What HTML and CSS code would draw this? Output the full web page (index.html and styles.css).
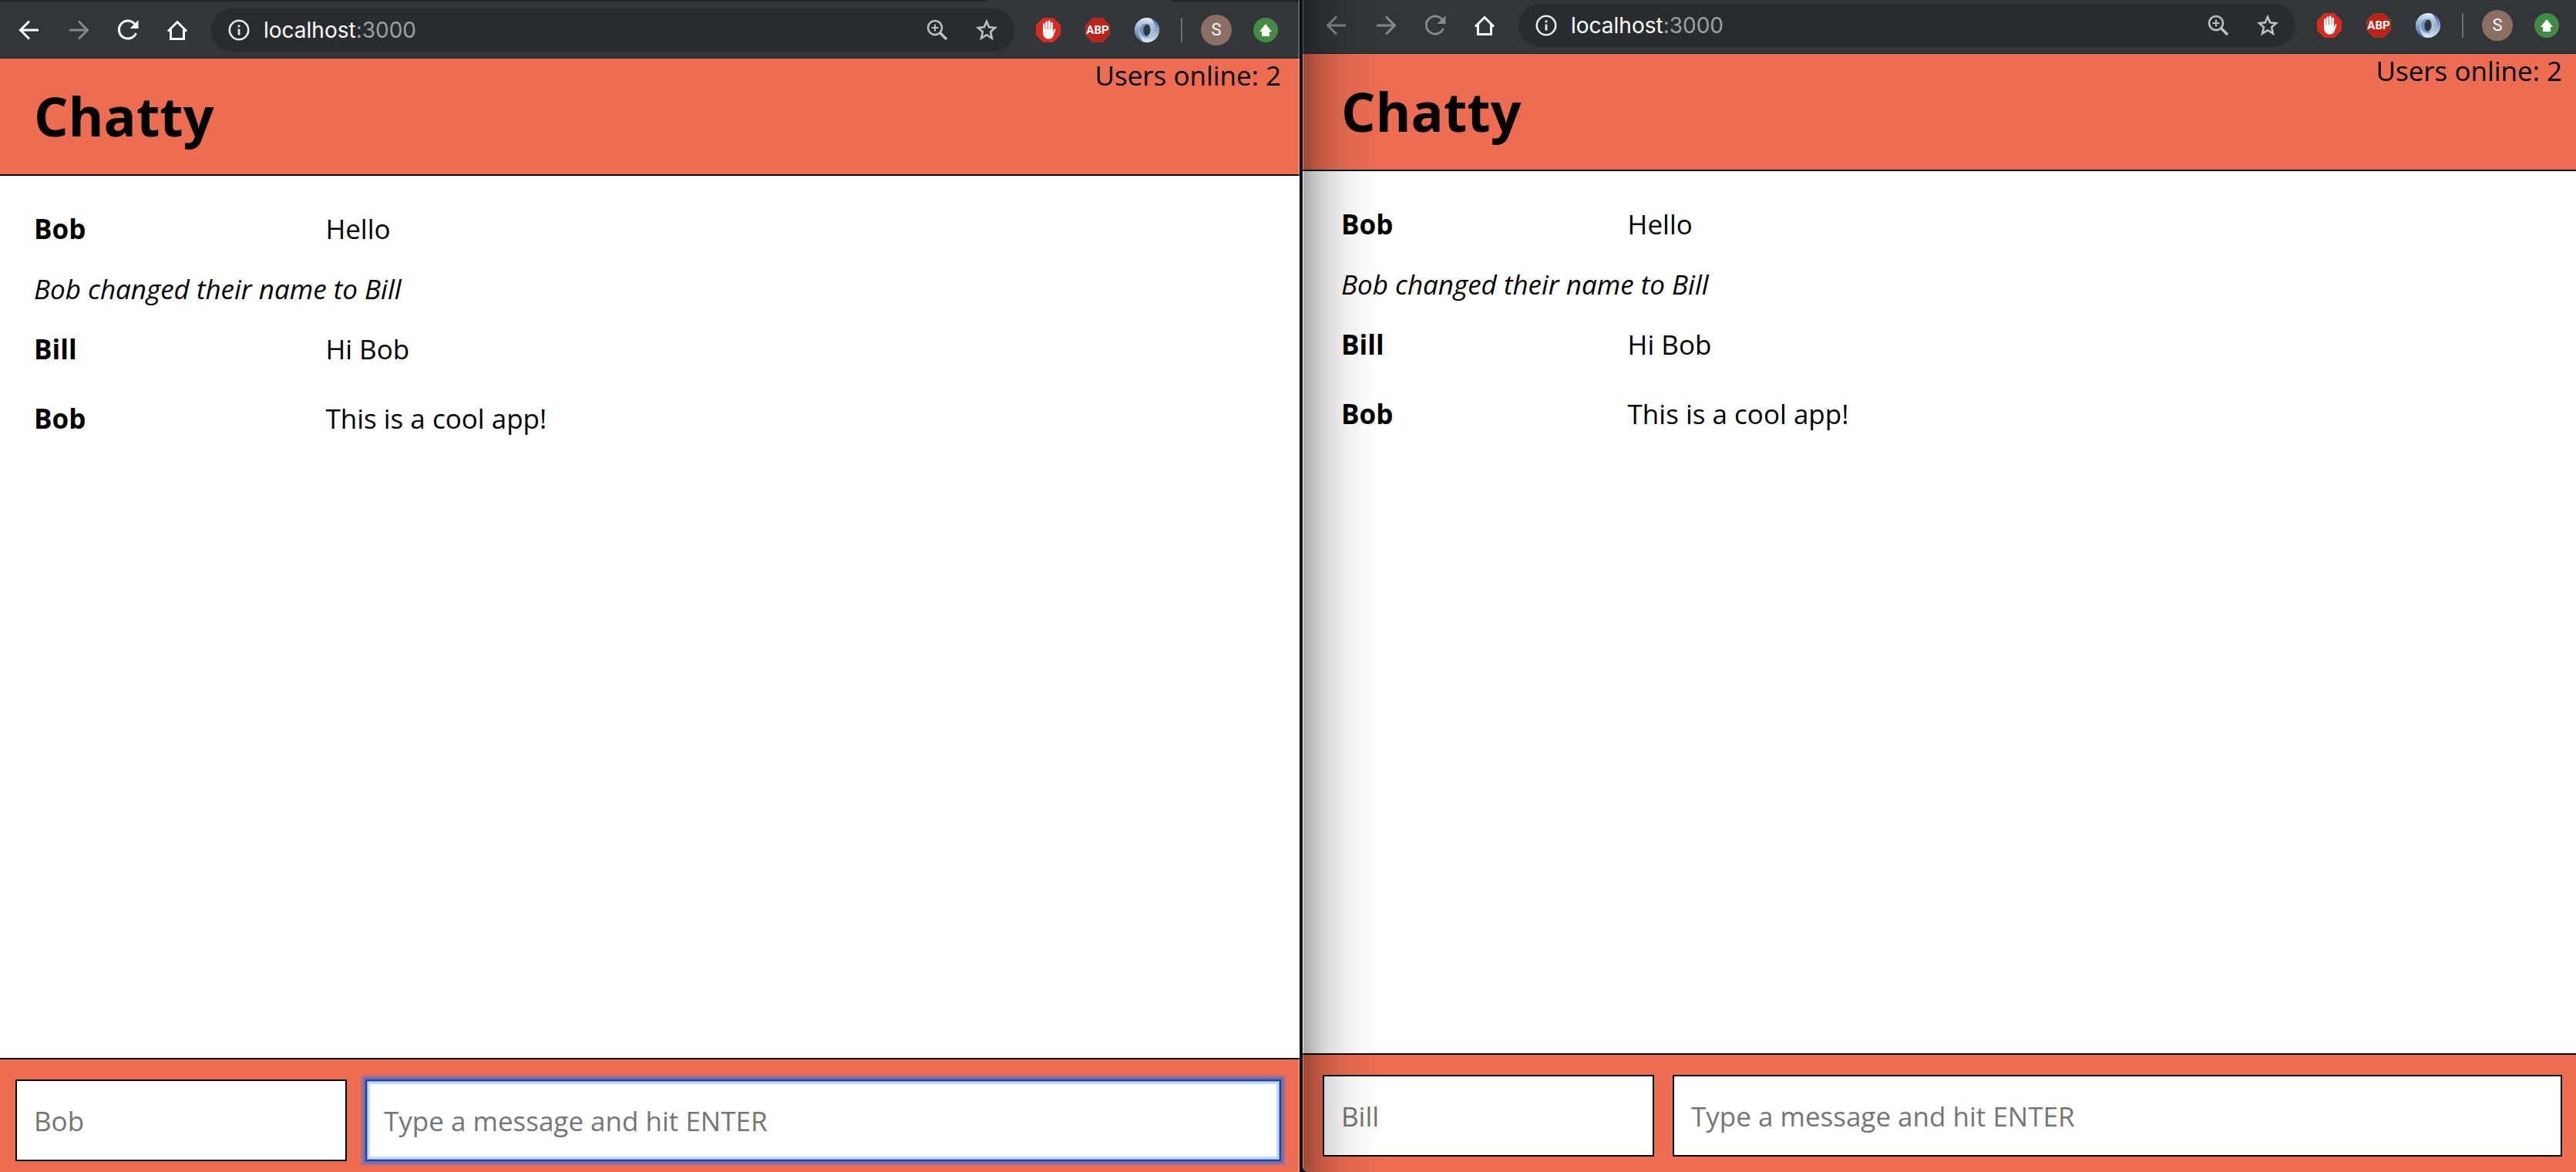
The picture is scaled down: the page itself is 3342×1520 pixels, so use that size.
FILE: index.html
```
<!DOCTYPE html>
<html lang="en">
<head>
<meta charset="utf-8">
<title>Chatty</title>
<link rel="stylesheet" href="styles.css">
</head>
<body>
<svg class="sprite" aria-hidden="true">
  <defs>
    <linearGradient id="ringBase" x1="0" y1="0" x2="0" y2="1"><stop offset="0" stop-color="#dfeaf4"/><stop offset=".5" stop-color="#8fadcd"/><stop offset="1" stop-color="#dce8f2"/></linearGradient>
    <linearGradient id="ringLeft" x1="0" y1="0" x2="0" y2="1"><stop offset="0" stop-color="#c3d5e6"/><stop offset=".6" stop-color="#7597bf"/><stop offset="1" stop-color="#3f689e"/></linearGradient>
    <linearGradient id="ringRight" x1="0" y1="0" x2="0" y2="1"><stop offset="0" stop-color="#3f689e"/><stop offset=".4" stop-color="#7597bf"/><stop offset="1" stop-color="#c9d9e8"/></linearGradient>
  </defs>
  <symbol id="back" viewBox="0 0 32 32"><path d="M28 16H5M16 4.500L4.500 16L16 27.500" fill="none" stroke="currentColor" stroke-width="3"/></symbol>
  <symbol id="forward" viewBox="0 0 32 32"><path d="M4 16H27M16 4.500L27.500 16L16 27.500" fill="none" stroke="currentColor" stroke-width="3"/></symbol>
  <symbol id="reload" viewBox="0 0 32 32"><path d="M25 8.500A11.500 11.500 0 1 0 26.500 20" fill="none" stroke="currentColor" stroke-width="3"/><path d="M29.500 3V14H18.500Z" fill="currentColor"/></symbol>
  <symbol id="home" viewBox="0 0 32 32"><path d="M4 17.500L16 5.500L28 17.500M7.500 15V27.500H24.500V15" fill="none" stroke="currentColor" stroke-width="3"/></symbol>
  <symbol id="info" viewBox="0 0 32 32"><circle cx="16" cy="16" r="12.200" fill="none" stroke="currentColor" stroke-width="2.600"/><path d="M14.600 9.500h2.800v2.800h-2.800zM14.600 14.500h2.800v8h-2.800z" fill="currentColor"/></symbol>
  <symbol id="magnify" viewBox="0 0 32 32"><circle cx="13" cy="13" r="9" fill="none" stroke="currentColor" stroke-width="2.600"/><path d="M13 8.500v9M8.500 13h9" stroke="currentColor" stroke-width="2"/><path d="M19.500 19.500L28 28" stroke="currentColor" stroke-width="3.600"/></symbol>
  <symbol id="star" viewBox="0 0 32 32"><path d="M16 5L19.200 12.300L27 13L21.100 18.300L22.900 26.500L16 22.200L9.100 26.500L10.900 18.300L5 13L12.800 12.300Z" fill="none" stroke="currentColor" stroke-width="2.600"/></symbol>
  <symbol id="hand" viewBox="0 0 32 32"><path d="M9.500 0h13L32 9.500v13L22.500 32h-13L0 22.500v-13z" fill="#d52d20"/><path d="M9 19V8.500a1.300 1.300 0 0 1 2.600 0V15h.7V6a1.400 1.400 0 0 1 2.800 0v9h.7V5a1.400 1.400 0 0 1 2.800 0v10h.7V7a1.300 1.300 0 0 1 2.600 0v12l1.200-3.500c.8-1.900 2.600-1.300 2.200.3L23 22.500C21.900 26 20 27.500 16.500 27.500S9 25 9 19z" fill="#fff"/></symbol>
  <symbol id="octagon" viewBox="0 0 32 32"><path d="M9.500 .5h13L31.500 9.500v13L22.500 31.500h-13L.5 22.500v-13z" fill="#bd2319" stroke="#8c3a34" stroke-width="1"/></symbol>
  <symbol id="ring" viewBox="0 0 32 32">
    <circle cx="16" cy="16" r="16" fill="url(#ringBase)"/>
    <path d="M20 7C10 2 2 11 5 20C6 25 8 28 11 31C4 29 0 23 0 16C0 6 10-1 20 7z" fill="url(#ringLeft)"/>
    <path d="M12 25C22 30 30 21 27 12C26 7 24 4 21 1C28 3 32 9 32 16C32 26 22 33 12 25z" fill="url(#ringRight)"/>
    <path d="M11 8C3 15 8 29 20 25C13 23 11 15 16 8z" fill="#5f86b4" opacity=".75"/>
    <path d="M21 24C28 17 25 4 14 7C19 9 21 17 17 24z" fill="#a9c0d9" opacity=".9"/>
    <ellipse cx="16" cy="16" rx="4.500" ry="7.500" fill="#2d3740" transform="rotate(4 16 16)"/>
  </symbol>
  <symbol id="up" viewBox="0 0 32 32"><circle cx="16" cy="16" r="16" fill="#448c45"/><path d="M16 8L24 18H21V24H11V18H8Z" fill="#fff"/></symbol>
</svg>

<div class="desktop">
  <section class="window" aria-label="Bob's browser">
    <div class="toolbar">
      <nav class="nav">
        <button class="tool" aria-label="Back"><svg><use href="#back"/></svg></button>
        <button class="tool dim" aria-label="Forward"><svg><use href="#forward"/></svg></button>
        <button class="tool" aria-label="Reload"><svg><use href="#reload"/></svg></button>
        <button class="tool" aria-label="Home"><svg><use href="#home"/></svg></button>
      </nav>
      <div class="omnibox">
        <button class="tool site" aria-label="Site information"><svg><use href="#info"/></svg></button>
        <span class="url">localhost<span class="port">:3000</span></span>
        <button class="tool soft" aria-label="Zoom"><svg><use href="#magnify"/></svg></button>
        <button class="tool soft" aria-label="Bookmark"><svg><use href="#star"/></svg></button>
      </div>
      <div class="extensions">
        <button class="tool" aria-label="Blocker"><svg><use href="#hand"/></svg></button>
        <button class="tool abp"><svg aria-hidden="true"><use href="#octagon"/></svg><span>ABP</span></button>
        <button class="tool" aria-label="JSON viewer"><svg><use href="#ring"/></svg></button>
      </div>
      <div class="account">
        <button class="avatar">S</button>
        <button class="tool" aria-label="Update"><svg><use href="#up"/></svg></button>
      </div>
    </div>
    <header class="header">
      <h1>Chatty</h1>
      <p class="online">Users online: 2</p>
    </header>
    <main class="messages">
      <div class="message"><strong>Bob</strong><span>Hello</span></div>
      <p class="notice">Bob changed their name to Bill</p>
      <div class="message"><strong>Bill</strong><span>Hi Bob</span></div>
      <div class="message"><strong>Bob</strong><span>This is a cool app!</span></div>
    </main>
    <footer class="chatbar">
      <input class="username" type="text" placeholder="Bob" aria-label="Your name">
      <input class="compose active" type="text" placeholder="Type a message and hit ENTER" aria-label="Message">
    </footer>
  </section>

  <section class="window behind" aria-label="Bill's browser">
    <div class="toolbar">
      <nav class="nav">
        <button class="tool dim" aria-label="Back"><svg><use href="#back"/></svg></button>
        <button class="tool dim" aria-label="Forward"><svg><use href="#forward"/></svg></button>
        <button class="tool dim" aria-label="Reload"><svg><use href="#reload"/></svg></button>
        <button class="tool" aria-label="Home"><svg><use href="#home"/></svg></button>
      </nav>
      <div class="omnibox">
        <button class="tool site" aria-label="Site information"><svg><use href="#info"/></svg></button>
        <span class="url">localhost<span class="port">:3000</span></span>
        <button class="tool soft" aria-label="Zoom"><svg><use href="#magnify"/></svg></button>
        <button class="tool soft" aria-label="Bookmark"><svg><use href="#star"/></svg></button>
      </div>
      <div class="extensions">
        <button class="tool" aria-label="Blocker"><svg><use href="#hand"/></svg></button>
        <button class="tool abp"><svg aria-hidden="true"><use href="#octagon"/></svg><span>ABP</span></button>
        <button class="tool" aria-label="JSON viewer"><svg><use href="#ring"/></svg></button>
      </div>
      <div class="account">
        <button class="avatar">S</button>
        <button class="tool" aria-label="Update"><svg><use href="#up"/></svg></button>
      </div>
    </div>
    <header class="header">
      <h1>Chatty</h1>
      <p class="online">Users online: 2</p>
    </header>
    <main class="messages">
      <div class="message"><strong>Bob</strong><span>Hello</span></div>
      <p class="notice">Bob changed their name to Bill</p>
      <div class="message"><strong>Bill</strong><span>Hi Bob</span></div>
      <div class="message"><strong>Bob</strong><span>This is a cool app!</span></div>
    </main>
    <footer class="chatbar">
      <input class="username" type="text" placeholder="Bill" aria-label="Your name">
      <input class="compose" type="text" placeholder="Type a message and hit ENTER" aria-label="Message">
    </footer>
  </section>
</div>
</body>
</html>
```
FILE: styles.css
```
* {
  box-sizing: border-box;
}

body {
  margin: 0;
  background: #0b1018;
  color: #000;
  font: 35px/50px "Open Sans", sans-serif;
}

h1,
p {
  margin: 0;
}

.sprite {
  position: absolute;
  width: 0;
  height: 0;
}

/* Two browser windows side by side; each overhangs the screen slightly */
.desktop {
  display: flex;
  gap: 4px;
  height: 100vh;
  overflow: hidden;
}

.window {
  position: relative;
  display: flex;
  flex: 1692 1 0;
  flex-direction: column;
  min-width: 0;
  margin: 0 0 -6px -6px;
  background: #fff;
}

.window::after {
  position: absolute;
  inset: 0;
  border-right: 2px solid rgba(255, 255, 255, 0.2);
  content: "";
  pointer-events: none;
}

.window.behind {
  flex-grow: 1658;
  margin: -6px -6px 0 0;
  border-radius: 0 0 0 8px;
  overflow: hidden;
}

/* Shadow cast by the window in front */
.window.behind::after {
  border: 0;
  border-left: 1px solid rgba(255, 255, 255, 0.2);
  background: linear-gradient(
    to right,
    rgba(0, 0, 0, 0.34) 0,
    rgba(0, 0, 0, 0.22) 16px,
    rgba(0, 0, 0, 0.12) 36px,
    rgba(0, 0, 0, 0.05) 60px,
    rgba(0, 0, 0, 0.02) 84px,
    transparent 104px
  );
}

.toolbar {
  position: relative;
  display: flex;
  align-items: center;
  height: 76px;
  padding: 0 28px;
  border-top: 2px solid #202124;
  border-bottom: 1px solid #27292c;
  background: #323639;
  color: #fff;
}

/* Foot of the active tab */
.toolbar::before {
  position: absolute;
  top: -2px;
  left: 76%;
  width: 240px;
  height: 2px;
  background: #323639;
  content: "";
}

.tool {
  display: block;
  flex: none;
  width: 32px;
  height: 32px;
  padding: 0;
  border: 0;
  background: none;
  color: inherit;
}

.tool svg {
  display: block;
  width: 32px;
  height: 32px;
}

.tool.dim {
  color: #85878a;
}

.tool.soft {
  color: #bdc1c6;
}

.nav,
.extensions {
  display: flex;
  gap: 32px;
}

.omnibox {
  display: flex;
  flex: 1;
  align-items: center;
  gap: 32px;
  height: 56px;
  margin: 0 28px;
  padding: 0 20px;
  border-radius: 28px;
  background: #282c2f;
}

.site {
  margin-right: -16px;
  color: #e8eaed;
}

.url {
  flex: 1;
  font: 28px/32px Inter, sans-serif;
}

.port {
  color: #9aa0a6;
}

.abp {
  position: relative;
}

.abp span {
  position: absolute;
  inset: 0;
  color: #fff;
  font: bold 15px/32px Roboto, sans-serif;
  text-align: center;
}

.account {
  display: flex;
  align-items: center;
  gap: 28px;
  margin-left: 28px;
}

.account::before {
  width: 2px;
  height: 32px;
  margin-right: -4px;
  background: #6c6f72;
  content: "";
}

.avatar {
  width: 40px;
  height: 40px;
  padding: 0;
  border: 0;
  border-radius: 50%;
  background: #8b6f65;
  color: #fff;
  font: 22px/40px Roboto, sans-serif;
}

.header {
  display: flex;
  align-items: flex-start;
  justify-content: space-between;
  padding: 0 24px 0 50px;
  border-bottom: 2px solid #000;
  background: #ed6d52;
}

.header h1 {
  padding: 34px 0 36px;
  font-size: 70px;
  line-height: 80px;
}

.online {
  line-height: 44px;
}

.messages {
  display: flex;
  flex: 1;
  flex-direction: column;
  gap: 28px;
  padding: 44px 50px;
}

.message {
  display: flex;
  gap: 60px;
}

.message strong {
  flex: 0 0 20%;
}

.message + .message {
  margin-top: 12px;
}

.notice {
  font-style: italic;
}

.chatbar {
  display: flex;
  gap: 24px;
  padding: 26px 24px 20px 26px;
  border-top: 2px solid #000;
  background: #ed6d52;
}

.chatbar input {
  height: 106px;
  min-width: 0;
  padding: 0 22px;
  border: 2px solid #000;
  border-radius: 0;
  outline: 0;
  background: #fff;
  color: #000;
  font: inherit;
}

.chatbar input::placeholder {
  color: #757575;
  opacity: 1;
}

.chatbar .username {
  width: 430px;
}

.chatbar .compose {
  flex: 1;
}

.chatbar .active {
  border-color: #1b4499;
  box-shadow:
    inset 0 0 0 1px #79a3f0,
    inset 0 0 0 4px #c6dafa,
    0 0 0 3px #756cb0,
    0 0 0 6px #b8707d;
}
```
